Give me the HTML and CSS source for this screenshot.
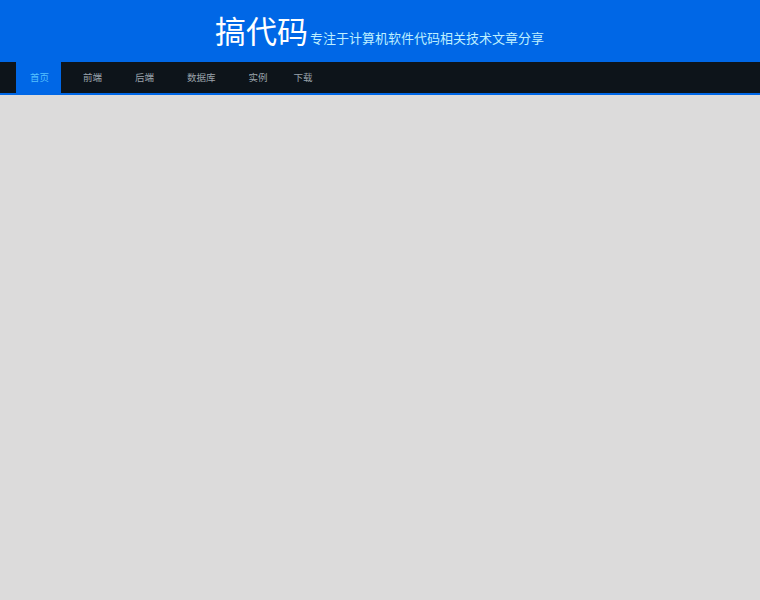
FILE: index.html
```html
<!DOCTYPE html>
<html lang="zh-CN">
<head>
<meta charset="utf-8">
<title>搞代码</title>
<link rel="stylesheet" href="styles.css">
</head>
<body>
<header class="site-header">
  <div class="brand">
    <h1 class="logo">搞代码</h1>
    <span class="slogan">专注于计算机软件代码相关技术文章分享</span>
  </div>
</header>
<nav class="site-nav">
  <ul class="nav-list">
    <li class="nav-item active"><a href="#">首页</a></li>
    <li class="nav-item"><a href="#">前端</a></li>
    <li class="nav-item"><a href="#">后端</a></li>
    <li class="nav-item"><a href="#">数据库</a></li>
    <li class="nav-item"><a href="#">实例</a></li>
    <li class="nav-item nav-last"><a href="#">下载</a></li>
  </ul>
</nav>
<main class="content"></main>
</body>
</html>
```
FILE: styles.css
```css
html, body {
  margin: 0;
  padding: 0;
}
body {
  background: #dcdbdb;
  font-family: "Noto Sans CJK SC", "Noto Sans", sans-serif;
  min-height: 600px;
}
.site-header {
  background: #0067e6;
  height: 62px;
}
.brand {
  display: flex;
  align-items: baseline;
  padding-left: 215px;
  height: 62px;
}
.logo {
  margin: 0;
  font-size: 31px;
  font-weight: normal;
  color: #ffffff;
  line-height: 60px;
}
.slogan {
  font-size: 13px;
  color: #bdefff;
  margin-left: 2px;
}
.site-nav {
  background: #0d141a;
  border-bottom: 2px solid #0067e6;
  height: 31px;
  padding-left: 16px;
}
.nav-list {
  list-style: none;
  margin: 0;
  padding: 0;
  display: flex;
  gap: 11px;
  height: 31px;
}
.nav-item {
  margin: 0;
}
.nav-item a {
  display: block;
  padding: 0 11px;
  height: 31px;
  line-height: 31px;
  font-size: 9.5px;
  color: #9aa3ab;
  text-decoration: none;
}
.nav-item.active a {
  background: #0067e6;
  color: #55c0ff;
  padding: 0 12px 0 14px;
  height: 33px;
}
.nav-last {
  margin-left: -7px;
}
```
